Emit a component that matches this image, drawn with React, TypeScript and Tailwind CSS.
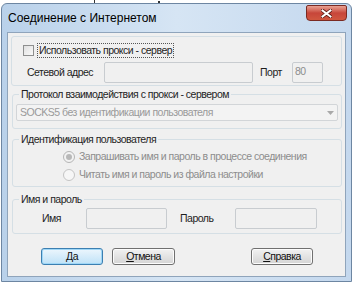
import type { ReactNode } from 'react'

const font = { fontFamily: '"Liberation Sans", Arial, sans-serif' }

function Group({ title, className, children }: { title?: string; className?: string; children: ReactNode }) {
  return (
    <div className={`relative rounded-[3px] border border-[#d5dfe5] ${className ?? ''}`}>
      {title && (
        <span className="absolute -top-[8px] left-[6px] whitespace-nowrap bg-[#f0f0f0] px-[2px] leading-[14px] text-[#1e1e1e]">
          {title}
        </span>
      )}
      {children}
    </div>
  )
}

function Field({ className }: { className?: string }) {
  return <div className={`h-[21px] rounded-[2px] border border-[#c8ccd0] bg-[#f0f0f0] ${className ?? ''}`} />
}

function Button({ label, hot, primary, className }: { label: string; hot: string; primary?: boolean; className?: string }) {
  return (
    <div
      className={`flex h-[17px] items-center justify-center rounded-[3px] border text-[#111] ${
        primary
          ? 'border-[#3c7fb1] bg-gradient-to-b from-[#ecf6fd] to-[#bfe2f7] shadow-[inset_0_0_0_1px_#9fd7f7]'
          : 'border-[#707070] bg-gradient-to-b from-[#f2f2f2] to-[#d4d4d4] shadow-[inset_0_0_0_1px_#fcfcfc]'
      } ${className ?? ''}`}
    >
      <span className="underline">{hot}</span>
      {label}
    </div>
  )
}

export default function App() {
  return (
    <div className="relative h-[284px] w-[353px] overflow-hidden bg-white" style={font}>
      <div className="absolute left-[94px] top-0 h-[3px] w-px bg-[#333]" />
      <div className="absolute left-[158px] top-[1px] h-[2px] w-[2px] bg-[#333]" />
      <div className="ml-[1px] mt-[3px] flex h-[279px] w-[351px] flex-col rounded-t-[6px] border border-[#6d86a2] bg-gradient-to-r from-[#b9d1ea] via-[#d6e5f4] to-[#c4d8ee]">
        <div className="relative flex h-[28px] items-center whitespace-nowrap pl-[6px] text-[12px] text-black">
          Соединение с Интернетом
          <div className="absolute right-[4px] top-[1px] flex h-[16px] w-[41px] items-center justify-center rounded-[4px] rounded-t-[2px] border border-[#7a2a22] bg-gradient-to-b from-[#e8a193] via-[#c7463a] to-[#d0573f]">
            <svg width="11" height="9" viewBox="0 0 11 9">
              <path d="M1.5 1.5l8 6M9.5 1.5l-8 6" stroke="#5a1a14" strokeWidth="3.6" strokeLinecap="square" />
              <path d="M1.5 1.5l8 6M9.5 1.5l-8 6" stroke="#fff" strokeWidth="2" strokeLinecap="square" />
            </svg>
          </div>
        </div>
        <div className="mx-[5px] mb-[4px] flex flex-1 flex-col whitespace-nowrap border border-[#8fa4bb] bg-[#f0f0f0] px-[3px] pt-[3px] text-[10.5px] tracking-[-0.5px] text-[#1e1e1e]">
          <Group className="h-[50px] pl-[11px] pt-[6px]">
            <div className="flex items-center gap-[3px]">
              <div className="h-[11px] w-[11px] border border-[#8e8f8f] bg-gradient-to-br from-[#e0e0e0] to-[#fafafa]" />
              <span className="border border-dotted border-[#555] px-[1px] leading-[13px]">Использовать прокси - сервер</span>
            </div>
            <div className="mt-[4px] flex items-center">
              <span className="ml-[4px] w-[77px]">Сетевой адрес</span>
              <Field className="w-[149px]" />
              <span className="ml-[7px] w-[32px]">Порт</span>
              <div className="flex h-[21px] w-[31px] items-start rounded-[2px] border border-[#c8ccd0] bg-[#f0f0f0] pl-[2px] pt-[1px] text-[#8d8d8d]">
                80
              </div>
            </div>
          </Group>
          <Group title="Протокол взаимодействия с прокси - сервером" className="ml-[1px] mt-[8px] h-[35px] px-[3px] pt-[9px]">
            <div className="flex h-[17px] items-center justify-between rounded-[2px] border border-[#d2d5d8] bg-[#f3f3f3] px-[3px] text-[#9a9a9a]">
              SOCKS5 без идентификации пользователя
              <svg width="7" height="4" viewBox="0 0 7 4">
                <path d="M0 0h7L3.5 4z" fill="#a9a9a9" />
              </svg>
            </div>
          </Group>
          <Group title="Идентификация пользователя" className="ml-[1px] mt-[10px] h-[48px] pl-[50px] pt-[10px] text-[#8d8d8d]">
            <div className="flex h-[14px] items-center gap-[4px]">
              <span className="flex h-[12px] w-[12px] items-center justify-center rounded-full border border-[#b5b5b5] bg-[#f2f2f2]">
                <span className="h-[6px] w-[6px] rounded-full bg-[#b8b8b8]" />
              </span>
              Запрашивать имя и пароль в процессе соединения
            </div>
            <div className="mt-[4px] flex h-[14px] items-center gap-[4px]">
              <span className="h-[12px] w-[12px] rounded-full border border-[#c4c4c4] bg-[#f6f6f6]" />
              Читать имя и пароль из файла настройки
            </div>
          </Group>
          <Group title="Имя и пароль" className="ml-[1px] mt-[12px] h-[35px] pt-[8px]">
            <div className="flex items-center">
              <span className="ml-[29px] w-[44px]">Имя</span>
              <Field className="h-[20px] w-[81px]" />
              <span className="ml-[13px] w-[55px]">Пароль</span>
              <Field className="h-[20px] w-[82px]" />
            </div>
          </Group>
          <div className="mt-[14px] flex">
            <Button primary hot="Д" label="а" className="ml-[30px] w-[62px]" />
            <Button hot="О" label="тмена" className="ml-[9px] w-[63px]" />
            <Button hot="С" label="правка" className="ml-[76px] w-[62px]" />
          </div>
        </div>
      </div>
    </div>
  )
}
